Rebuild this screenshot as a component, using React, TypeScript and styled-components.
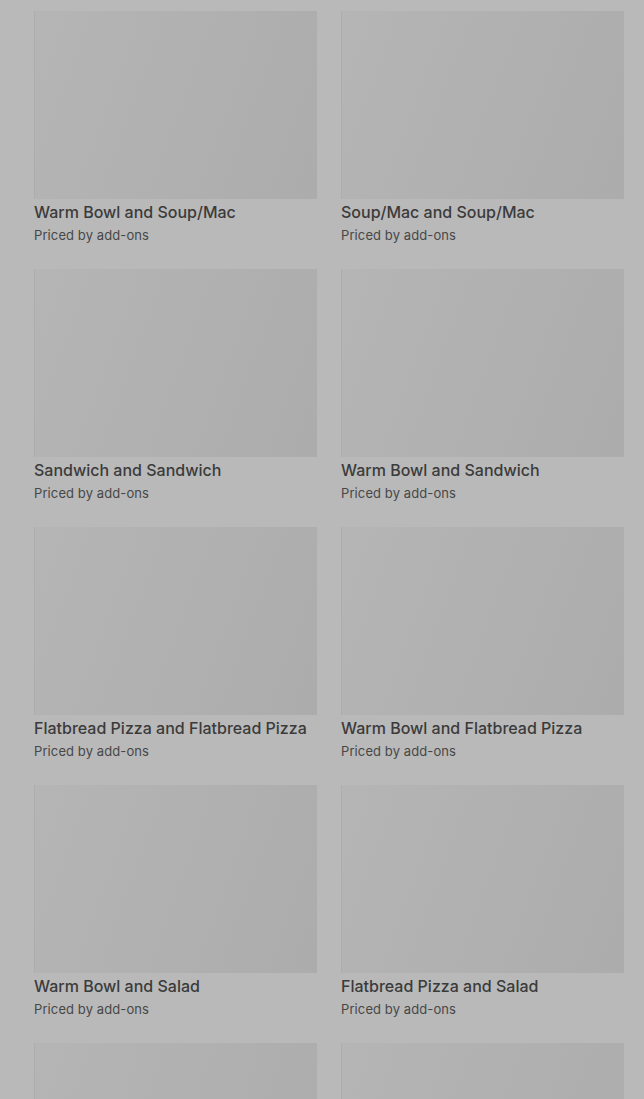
import styled, { createGlobalStyle } from 'styled-components'

const GlobalStyle = createGlobalStyle`
  * {
    margin: 0;
    padding: 0;
    box-sizing: border-box;
  }

  body {
    background-color: #b9b9b9;
    font-family: 'Inter', 'Roboto', sans-serif;
    height: 1099px;
    overflow: hidden;
  }
`

const Grid = styled.main`
  display: grid;
  grid-template-columns: repeat(2, 283px);
  column-gap: 24px;
  row-gap: 23px;
  padding: 11px 20px 0 34px;
`

const Card = styled.article`
  display: flex;
  flex-direction: column;
`

const Thumb = styled.div`
  height: 188px;
  background: linear-gradient(110deg, #b5b5b5 0%, #b1b1b1 45%, #acacac 100%);
  border-left: 1px solid #adadad;
`

const Title = styled.h3`
  font-size: 16px;
  font-weight: 500;
  line-height: 24px;
  margin-top: 1px;
  color: #3b3b3b;
  white-space: nowrap;
`

const Sub = styled.p`
  font-size: 13px;
  letter-spacing: 0.1px;
  line-height: 22px;
  color: #474747;
`

const items = [
  'Warm Bowl and Soup/Mac',
  'Soup/Mac and Soup/Mac',
  'Sandwich and Sandwich',
  'Warm Bowl and Sandwich',
  'Flatbread Pizza and Flatbread Pizza',
  'Warm Bowl and Flatbread Pizza',
  'Warm Bowl and Salad',
  'Flatbread Pizza and Salad',
]

function App() {
  return (
    <>
      <GlobalStyle />
      <Grid>
        {items.map((name, i) => (
          <Card key={i}>
            <Thumb />
            <Title>{name}</Title>
            <Sub>Priced by add-ons</Sub>
          </Card>
        ))}
        <Card>
          <Thumb />
        </Card>
        <Card>
          <Thumb />
        </Card>
      </Grid>
    </>
  )
}

export default App
